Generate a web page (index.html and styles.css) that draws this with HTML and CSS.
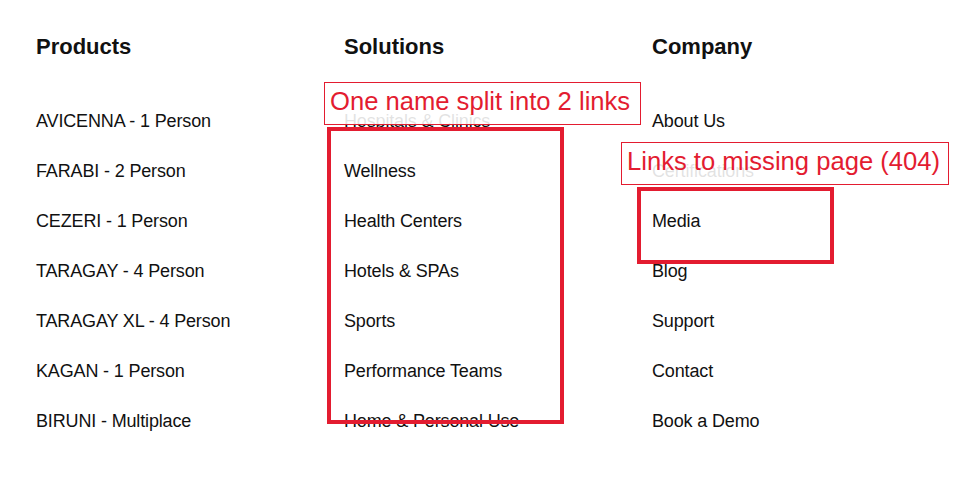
FILE: index.html
```html
<!DOCTYPE html>
<html lang="en">
<head>
<meta charset="utf-8">
<title>Footer links</title>
<link rel="stylesheet" href="styles.css">
</head>
<body>
<footer class="footer">
  <nav class="col">
    <h3 class="col-title">Products</h3>
    <ul class="links">
      <li><a href="#">AVICENNA - 1 Person</a></li>
      <li><a href="#">FARABI - 2 Person</a></li>
      <li><a href="#">CEZERI - 1 Person</a></li>
      <li><a href="#">TARAGAY - 4 Person</a></li>
      <li><a href="#">TARAGAY XL - 4 Person</a></li>
      <li><a href="#">KAGAN - 1 Person</a></li>
      <li><a href="#">BIRUNI - Multiplace</a></li>
    </ul>
  </nav>
  <nav class="col">
    <h3 class="col-title">Solutions</h3>
    <ul class="links">
      <li><a href="#">Hospitals &amp; Clinics</a></li>
      <li><a href="#">Wellness</a></li>
      <li><a href="#">Health Centers</a></li>
      <li><a href="#">Hotels &amp; SPAs</a></li>
      <li><a href="#">Sports</a></li>
      <li><a href="#">Performance Teams</a></li>
      <li><a href="#">Home &amp; Personal Use</a></li>
    </ul>
  </nav>
  <nav class="col">
    <h3 class="col-title">Company</h3>
    <ul class="links">
      <li><a href="#">About Us</a></li>
      <li><a href="#">Certifications</a></li>
      <li><a href="#">Media</a></li>
      <li><a href="#">Blog</a></li>
      <li><a href="#">Support</a></li>
      <li><a href="#">Contact</a></li>
      <li><a href="#">Book a Demo</a></li>
    </ul>
  </nav>

  <!-- review notes -->
  <div class="note note-split">One name split into 2 links</div>
  <div class="mark mark-split"></div>
  <div class="note note-missing">Links to missing page (404)</div>
  <div class="mark mark-missing"></div>
</footer>
</body>
</html>
```

FILE: styles.css
```css
* { box-sizing: border-box; }

html, body {
  margin: 0;
  padding: 0;
  background: #fff;
}

.footer {
  position: relative;
  display: grid;
  grid-template-columns: 308px 308px 308px;
  padding: 32px 0 0 36px;
  width: 960px;
  height: 480px;
  font-family: "Liberation Sans", Arial, sans-serif;
  color: #111;
}

.col-title {
  margin: 0;
  font-size: 22px;
  font-weight: 600;
  line-height: 30px;
  letter-spacing: 0;
}

.links {
  list-style: none;
  margin: 48px 0 0;
  padding: 0;
  display: flex;
  flex-direction: column;
  gap: 28px;
}

.links li {
  line-height: 22px;
  font-size: 18px;
  letter-spacing: -0.15px;
}

.links a {
  color: #111;
  text-decoration: none;
}

.note {
  position: absolute;
  border: 1px solid #e31c30;
  background: rgba(255, 255, 255, 0.88);
  color: #e31c30;
  font-family: "Liberation Sans", Arial, sans-serif;
  font-size: 25.6px;
  line-height: 36px;
  padding: 0 5px;
  white-space: nowrap;
}

.mark {
  position: absolute;
  border: 4px solid #e31c30;
}

.note-split { left: 324px; top: 82px; width: 317px; height: 43px; }
.mark-split { left: 327px; top: 127px; width: 237px; height: 297px; }
.note-missing { left: 621px; top: 142px; width: 328px; height: 43px; }
.mark-missing { left: 637px; top: 187px; width: 197px; height: 77px; }
```
